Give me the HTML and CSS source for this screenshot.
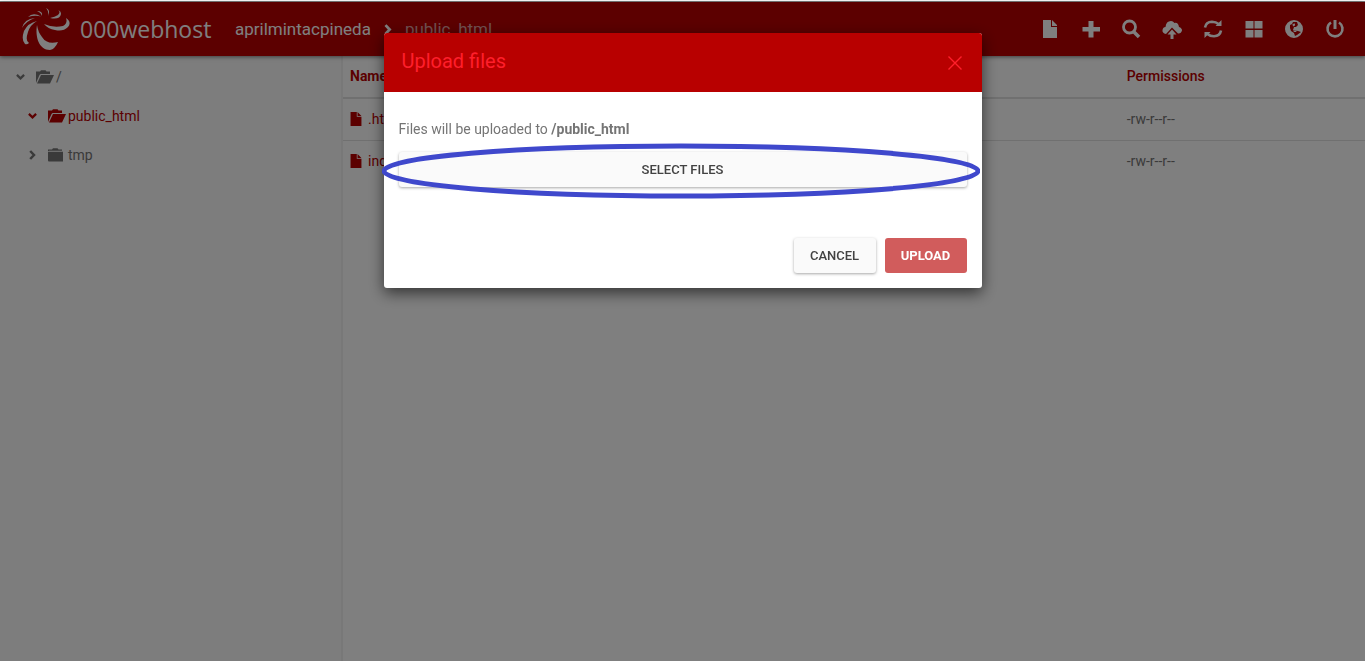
FILE: index.html
```html
<!DOCTYPE html>
<html lang="en">
<head>
<meta charset="utf-8">
<title>000webhost File Manager</title>
<link rel="stylesheet" href="styles.css">
</head>
<body>
<svg class="sprite" aria-hidden="true">
  <symbol id="file" viewBox="0 0 14 18"><path d="M0 0H8V6H14V18H0Z M9 0L14 5H9Z"/></symbol>
  <symbol id="folder" viewBox="0 0 16 14"><path d="M0 3V1.500H4L5 0.300H9.500L10.500 1.500H14V2.800H1V3Z M0 3.800H15V13.500H1Q0 13.500 0 12.500Z"/></symbol>
  <symbol id="folder-open" viewBox="0 0 18 14"><path d="M0 13V1.500H4L5 0.300H9.500L10.500 1.500H14V4H4.500L3.500 5Z M5 5H18L14 13.500H1Z"/></symbol>
  <symbol id="down" viewBox="0 0 10 7"><path d="M1 1.200L5 5L9 1.200" fill="none" stroke="currentColor" stroke-width="2.500"/></symbol>
  <symbol id="right" viewBox="0 0 7 10"><path d="M1.200 1L5 5L1.200 9" fill="none" stroke="currentColor" stroke-width="2.500"/></symbol>
</svg>
<div class="app">
  <header class="topbar">
    <a class="brand" href="#">
      <svg class="brand-mark" viewBox="0 0 48 42" aria-hidden="true">
        <path d="M15 17C13 29 17 42 28 42Q33 41 36 34Q25 37 20 29Q16 24 15 17Z"/>
        <path d="M22 16Q31 20 41 18Q46 15 44 10Q50 14 46 19Q41 24 33 22Q26 21 22 16Z"/>
        <path d="M15 13Q6 15 2 23Q-1 32 3 36Q5 37 7 35Q3 33 6 24Q8 17 15 13Z"/>
        <path d="M13 10Q2 11 0 20Q4 13 13 10Z"/>
        <path d="M6 9Q11 4 19 8.500Q13 7 6 9Z"/>
        <path d="M15 3Q21 3 20 8Q19 4.500 15 3Z"/>
        <path d="M24 0Q29 2 26 8Q27 3 24 0Z"/>
        <path d="M36 2Q39 4 36 7Q33 9 28 10Q38 12 39 6Q39 3 36 2Z"/>
      </svg>
      <span>000webhost</span>
    </a>
    <nav class="crumbs">
      <a href="#">aprilmintacpineda</a>
      <svg class="crumb-sep" aria-hidden="true"><use href="#right"/></svg>
      <a class="current" href="#">public_html</a>
    </nav>
    <div class="tools">
      <button aria-label="New file"><svg viewBox="0 0 20 20"><path d="M3 1H11V8H17V19H3Z M12 1L17 6V7H12Z"/></svg></button>
      <button aria-label="New folder"><svg viewBox="0 0 20 20"><path d="M7.500 2H12.500V8H19V12.500H12.500V18.500H7.500V12.500H1.500V8H7.500Z"/></svg></button>
      <button aria-label="Search"><svg viewBox="0 0 20 20"><g fill="none" stroke="currentColor"><circle cx="8.500" cy="8" r="6" stroke-width="2.800"/><path d="M12.500 12.500L18 18" stroke-width="3.500"/></g></svg></button>
      <button aria-label="Upload"><svg viewBox="0 0 20 20"><path d="M4 15Q0 14 0.500 11Q1 8 3.500 8Q4 2 9 2Q11 2 12.500 4Q16 3 17 8Q20 9 20 11.500Q19 15 16 14.500L10 8.500Z M10 10.500L14.500 15.500H11.500V20H8.500V15.500H5.500Z"/></svg></button>
      <button aria-label="Refresh"><svg viewBox="0 0 20 20"><path d="M2 8.500Q3 3 9 2.800Q13 2.800 15.500 5" fill="none" stroke="currentColor" stroke-width="2.600"/><path d="M18.500 1V7H12.500Z M1.500 19V13H7.500Z"/><path d="M18 11.500Q17 17 11 17.200Q7 17.200 4.500 15" fill="none" stroke="currentColor" stroke-width="2.600"/></svg></button>
      <button aria-label="Grid view"><svg viewBox="0 0 20 20"><path d="M1.500 2H9.500V9.500H1.500Z M10.500 2H18.500V9.500H10.500Z M1.500 11H9.500V18.500H1.500Z M10.500 11H18.500V18.500H10.500Z"/></svg></button>
      <button aria-label="Language"><svg viewBox="0 0 20 20"><path fill-rule="evenodd" d="M10 1A9 9 0 1 0 10 19A9 9 0 1 0 10 1ZM9 3L13 3L14 6L12 8L10 8L9 11L14 12L17 13L13 16L11 17L10 14L7 12L6 9L6 6L8 5Z"/><path d="M8.500 5L11 4.500L11 6.500L9 7.500Z M9 11.500H13L12 13H10Z"/></svg></button>
      <button aria-label="Log out"><svg viewBox="0 0 20 20"><path d="M6 3.500A7.500 7.500 0 1 0 14 3.500" fill="none" stroke="currentColor" stroke-width="2.600"/><path d="M8.500 1H11.500V10H8.500Z"/></svg></button>
    </div>
  </header>
  <div class="workspace">
    <aside class="tree">
      <a class="node" href="#"><svg class="caret"><use href="#down"/></svg><svg class="folder"><use href="#folder-open"/></svg><span>/</span></a>
      <a class="node child active" href="#"><svg class="caret"><use href="#down"/></svg><svg class="folder"><use href="#folder-open"/></svg><span>public_html</span></a>
      <a class="node child" href="#"><svg class="caret"><use href="#right"/></svg><svg class="folder closed"><use href="#folder"/></svg><span>tmp</span></a>
    </aside>
    <main class="listing">
      <table class="files">
        <thead><tr><th class="col-name">Name</th><th>Permissions</th></tr></thead>
        <tbody>
          <tr><td><a href="#"><svg class="doc"><use href="#file"/></svg>.htaccess</a></td><td>-rw-r--r--</td></tr>
          <tr><td><a href="#"><svg class="doc"><use href="#file"/></svg>index.php</a></td><td>-rw-r--r--</td></tr>
        </tbody>
      </table>
    </main>
  </div>
</div>
<div class="backdrop">
  <section class="modal" role="dialog" aria-labelledby="dialog-title">
    <header class="modal-head">
      <h2 id="dialog-title">Upload files</h2>
      <button class="close" aria-label="Close"><svg viewBox="0 0 14 14"><path d="M0.500 0.500L13.500 13.500M13.500 0.500L0.500 13.500"/></svg></button>
    </header>
    <div class="modal-body">
      <p>Files will be uploaded to <strong>/public_html</strong></p>
      <button class="btn select">Select files</button>
      <div class="actions">
        <button class="btn">Cancel</button>
        <button class="btn upload">Upload</button>
      </div>
    </div>
    <svg class="highlight" viewBox="0 0 598 56" preserveAspectRatio="none" aria-hidden="true"><ellipse cx="299" cy="28" rx="297" ry="25"/></svg>
  </section>
</div>
</body>
</html>
```
FILE: styles.css
```css
* { box-sizing: border-box; }
body {
  margin: 0;
  background: #fff;
  color: #757575;
  font: 14px/20px Roboto, "Liberation Sans", sans-serif;
}
a { color: inherit; text-decoration: none; }
button { font: inherit; border: 0; background: none; color: inherit; padding: 0; cursor: pointer; }
svg { fill: currentColor; flex: none; }
.sprite { display: none; }

.app { display: flex; flex-direction: column; min-height: 100vh; padding-top: 2px; }
.topbar {
  display: flex;
  align-items: center;
  height: 54px;
  padding: 0 20px 0 22px;
  background: #b80000;
  color: #fff;
  box-shadow: 0 1px 4px rgba(0, 0, 0, .5);
  z-index: 1;
}
.brand {
  display: flex;
  align-items: center;
  gap: 10px;
  width: 213px;
  font: 23px/32px "Open Sans", "Noto Sans", sans-serif;
}
.brand-mark { width: 48px; height: 42px; }
.crumbs { display: flex; align-items: center; gap: 13px; font-size: 17px; }
.crumb-sep { width: 8px; height: 11px; stroke-width: 3; }
.current { color: #e0a0a0; }
.tools { display: flex; justify-content: space-between; width: 305px; margin-left: auto; padding-bottom: 1px; }
.tools button, .tools svg { display: block; width: 20px; height: 20px; }

.workspace { display: flex; flex: 1; }
.tree { width: 343px; border-right: 2px solid #f0f0f0; background: #fafafa; padding-top: 1px; }
.node { display: flex; align-items: center; height: 39px; padding-left: 16px; }
.node.child { padding-left: 28px; }
.node svg { color: #757575; }
.node.active, .node.active svg { color: #b80000; }
.caret { width: 9px; height: 10px; margin-right: 11px; }
.folder { width: 18px; height: 14px; margin-right: 2px; }
.closed { width: 16px; margin-right: 4px; }
.listing { flex: 1; }
.files { width: 100%; border-collapse: collapse; table-layout: fixed; }
.files th, .files td { height: 42px; padding: 0 7px; text-align: left; border-bottom: 1px solid #e0e0e0; }
.files th { padding-bottom: 2px; color: #b80000; font-weight: 500; border-bottom-width: 2px; }
.files tr:last-child td { border-bottom: 0; }
.files .col-name { width: 76%; font-weight: 700; }
.files td a { display: flex; align-items: center; gap: 6px; color: #b80000; }
.doc { width: 12px; height: 14px; }

.backdrop {
  position: fixed;
  inset: 1px 0 0;
  display: flex;
  justify-content: center;
  align-items: flex-start;
  padding-top: 32px;
  background: rgba(0, 0, 0, .5);
  z-index: 2;
}
.modal {
  position: relative;
  width: 598px;
  max-width: 100%;
  background: #fff;
  border-radius: 3px;
  box-shadow: 0 5px 15px rgba(0, 0, 0, .6);
}
.modal-head {
  display: flex;
  justify-content: space-between;
  align-items: center;
  height: 59px;
  padding: 0 20px 0 18px;
  background: #b80000;
  color: #ff1f2b;
  border-radius: 3px 3px 0 0;
}
.modal-head h2 { margin: 0 0 4px; font-size: 20px; font-weight: 400; }
.close svg { display: block; width: 14px; height: 14px; stroke: currentColor; stroke-width: 1.400; }
.modal-body { padding: 27px 15px 15px; }
.modal-body p { margin: 0 0 13px; }
.modal-body strong { font-weight: 700; }
.btn {
  height: 35px;
  min-width: 82px;
  padding: 0 15px;
  border-radius: 3px;
  background: #fafafa;
  color: #424242;
  font-size: 13px;
  font-weight: 500;
  text-transform: uppercase;
  box-shadow: 0 1px 3px rgba(0, 0, 0, .35);
}
.select { display: block; width: 100%; }
.actions { display: flex; justify-content: flex-end; gap: 9px; margin-top: 51px; }
.upload { background: #d15c5c; color: #fff; font-weight: 700; box-shadow: none; }
.highlight {
  position: absolute;
  left: -2px;
  top: 110px;
  width: 100%;
  height: 56px;
  fill: none;
  stroke: #3f48cc;
  stroke-width: 5;
  pointer-events: none;
}
```
